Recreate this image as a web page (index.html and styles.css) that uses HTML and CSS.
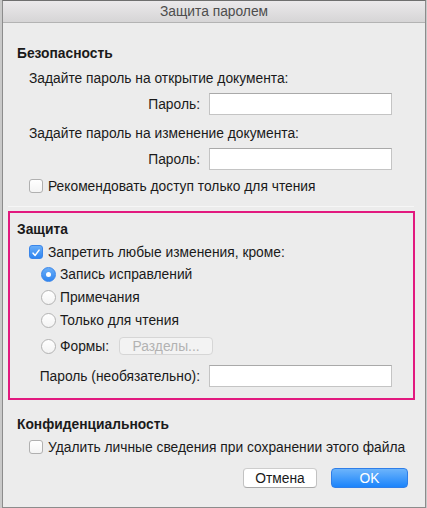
FILE: index.html
```html
<!DOCTYPE html>
<html lang="ru">
<head>
<meta charset="utf-8">
<link rel="stylesheet" href="styles.css">
</head>
<body>
<div class="window">
  <div class="titlebar">Защита паролем</div>
  <div class="content">
    <section class="sec sec-security">
      <div class="row heading">Безопасность</div>
      <div class="row indent">Задайте пароль на открытие документа:</div>
      <div class="pwd-row">
        <label class="pwd-label">Пароль:</label>
        <div class="input"></div>
      </div>
      <div class="row indent gap-top">Задайте пароль на изменение документа:</div>
      <div class="pwd-row">
        <label class="pwd-label">Пароль:</label>
        <div class="input"></div>
      </div>
      <div class="row indent check-row">
        <span class="checkbox"></span>
        <span>Рекомендовать доступ только для чтения</span>
      </div>
    </section>
    <div class="separator"></div>
    <section class="protect">
      <div class="row heading">Защита</div>
      <div class="opt-row indent check-row">
        <span class="checkbox checked">
          <svg viewBox="0 0 14 14" width="14" height="14"><path d="M3.6 7.2 L6 9.8 L10.6 3.6" fill="none" stroke="#fff" stroke-width="1.8" stroke-linecap="round" stroke-linejoin="round"/></svg>
        </span>
        <span>Запретить любые изменения, кроме:</span>
      </div>
      <div class="opt-row radio-row">
        <span class="radio selected"></span>
        <span>Запись исправлений</span>
      </div>
      <div class="opt-row radio-row">
        <span class="radio"></span>
        <span>Примечания</span>
      </div>
      <div class="opt-row radio-row">
        <span class="radio"></span>
        <span>Только для чтения</span>
      </div>
      <div class="forms-row radio-row">
        <span class="radio"></span>
        <span>Формы:</span>
        <span class="btn-disabled">Разделы...</span>
      </div>
      <div class="pwd-row pwd-row-inner">
        <label class="pwd-label">Пароль (необязательно):</label>
        <div class="input"></div>
      </div>
    </section>
    <section class="sec sec-privacy">
      <div class="row heading">Конфиденциальность</div>
      <div class="row indent check-row">
        <span class="checkbox"></span>
        <span>Удалить личные сведения при сохранении этого файла</span>
      </div>
    </section>
    <div class="buttons">
      <button class="btn">Отмена</button>
      <button class="btn btn-primary">OK</button>
    </div>
  </div>
</div>
</body>
</html>
```
FILE: styles.css
```css
* { box-sizing: border-box; }
html, body {
  margin: 0;
  padding: 0;
  background: #c9c9c9;
}
body {
  width: 427px;
  height: 508px;
  padding: 0 1px 0 2px;
  font-family: "Liberation Sans", Arial, sans-serif;
  font-size: 13.8px;
  color: #1a1a1a;
}
.window {
  width: 424px;
  height: 508px;
  border: 1px solid #8c8c8c;
  border-top-color: #6f6f6f;
  background: #ececec;
  display: flex;
  flex-direction: column;
}
.titlebar {
  height: 22px;
  flex: none;
  border-bottom: 1px solid #b3b3b3;
  background: linear-gradient(#ebe9eb, #d6d5d6);
  text-align: center;
  line-height: 21px;
  color: #4d4d4d;
  font-size: 13.8px;
}
.content {
  padding: 20px 17px 0 0;
  display: flex;
  flex-direction: column;
}
.sec { padding-left: 14px; display: flex; flex-direction: column; }
.row {
  height: 20px;
  display: flex;
  align-items: center;
  white-space: nowrap;
}
.heading { font-weight: bold; }
.indent { padding-left: 12px; }
.sec-security .row.indent:nth-child(2) { margin-top: 5px; }
.gap-top { margin-top: 8px; }
.pwd-row {
  display: grid;
  grid-template-columns: 197px 183px;
  column-gap: 9px;
  align-items: center;
  margin-top: 5px;
}
.sec-security .pwd-row { margin-left: -14px; }
.pwd-label { text-align: right; white-space: nowrap; }
.input {
  height: 22px;
  background: #fff;
  border: 1px solid #c4c4c4;
  border-top-color: #a9a9a9;
}
.check-row { margin-top: 6px; gap: 5px; }
.checkbox {
  width: 14px;
  height: 14px;
  flex: none;
  border: 1px solid #b0b0b0;
  border-radius: 3px;
  background: linear-gradient(#ffffff, #f4f4f4);
  display: inline-flex;
}
.checkbox.checked {
  border-color: #3a86ea;
  background: linear-gradient(#69aef8, #2f85f0);
}
.separator {
  height: 1px;
  background: #dcdcdc;
  border-bottom: 1px solid #f6f6f6;
  margin: 10px 0 0 5px;
  width: 406px;
}
.protect {
  margin: 4px 0 0 5px;
  width: 407px;
  border: 2px solid #e2197f;
  padding: 6px 0 11px 7px;
  display: flex;
  flex-direction: column;
}
.opt-row {
  height: 22px;
  display: flex;
  align-items: center;
  white-space: nowrap;
}
.protect .check-row { margin-top: 2px; }
.radio-row { padding-left: 24px; gap: 4px; height: 23px; }
.radio {
  width: 15px;
  height: 15px;
  flex: none;
  border-radius: 50%;
  border: 1px solid #b3b3b3;
  background: linear-gradient(#ffffff, #f3f3f3);
  display: inline-flex;
  align-items: center;
  justify-content: center;
}
.radio.selected {
  border-color: #3a86ea;
  background: linear-gradient(#69aef8, #2f85f0);
}
.radio.selected::after {
  content: "";
  width: 5px;
  height: 5px;
  border-radius: 50%;
  background: #fff;
}
.forms-row {
  height: 26px;
  margin-top: 1px;
  display: flex;
  align-items: center;
  white-space: nowrap;
}
.btn-disabled {
  margin-left: 6px;
  width: 94px;
  height: 18px;
  border: 1px solid #d6d6d6;
  border-radius: 4px;
  background: #f3f3f3;
  color: #b2b2b2;
  display: inline-flex;
  align-items: center;
  justify-content: center;
}
.pwd-row-inner {
  grid-template-columns: 183px 183px;
  margin-top: 6px;
}
.sec-privacy { margin-top: 14px; }
.sec-privacy .check-row { margin-top: 3px; }
.buttons {
  margin-top: 11px;
  display: flex;
  justify-content: flex-end;
  gap: 14px;
}
.btn {
  height: 20px;
  padding: 0;
  font-family: inherit;
  font-size: 13.8px;
  border-radius: 4px;
  border: 1px solid #c2c2c2;
  border-top-color: #cdcdcd;
  border-bottom-color: #a9a9a9;
  background: #fff;
  color: #1a1a1a;
  width: 74px;
}
.btn-primary {
  width: 77px;
  color: #fff;
  border-color: #2f7ee8;
  background: linear-gradient(#6cb4fb, #1b84fb);
}
```
